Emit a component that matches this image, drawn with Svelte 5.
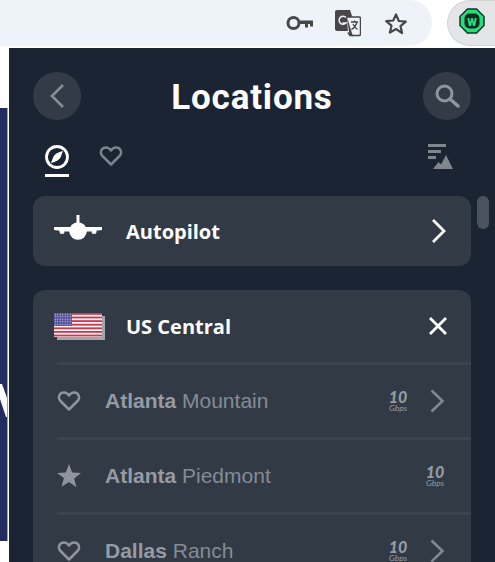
<script>
  const cities = [
    { name: 'Atlanta', area: 'Mountain', fav: false, arrow: true },
    { name: 'Atlanta', area: 'Piedmont', fav: true, arrow: false },
    { name: 'Dallas', area: 'Ranch', fav: false, arrow: true }
  ];

  const stripes = [0, 1, 2, 3, 4, 5, 6];
</script>

<div class="page">
  <header class="toolbar">
    <div class="omnibox">
      <svg class="key" width="28" height="16" viewBox="0 0 28 16">
        <circle cx="7.500" cy="8" r="5.500" fill="none" stroke="#474747" stroke-width="3" />
        <path d="M13 5.500h14v6h-3v-2.500h-2v3.500h-3v-3.500h-6z" fill="#474747" />
      </svg>
      <svg class="translate" width="26" height="27" viewBox="0 0 26 27">
        <path d="M2 0h13l7 21H2a2 2 0 0 1-2-2V2a2 2 0 0 1 2-2z" fill="#474747" />
        <path d="M12 7h12a1.500 1.500 0 0 1 1.500 1.500V24a1.500 1.500 0 0 1-1.500 1.500H15l-2-3" fill="#eef2f9" stroke="#474747" stroke-width="1.500" />
        <path d="M12 7l6 19.500-3.500-1z" fill="#474747" />
        <path d="M11 7.500A4 4 0 1 0 11 13H7.500" fill="none" stroke="#eef2f9" stroke-width="1.500" />
        <path d="M16 12h7M19.500 10.500v1.500M22 12c-1 4-3 6-5.500 7.500M18 14c1 2 2.500 4 4.500 5.500" fill="none" stroke="#474747" stroke-width="1.300" />
      </svg>
      <svg class="star" width="24" height="23" viewBox="0 0 24 23">
        <path d="M12 2.500l2.800 6.500 7 .6-5.300 4.600 1.600 6.900L12 17l-6.100 3.600 1.600-6.900L2.200 9.100l7-.6z" fill="none" stroke="#474747" stroke-width="2.200" stroke-linejoin="round" />
      </svg>
    </div>
    <div class="extension">
      <svg width="26" height="26" viewBox="0 0 26 26">
        <path d="M8.500 1h9L25 8.500v9L17.500 25h-9L1 17.500v-9z" fill="#25e07a" stroke="#12352a" stroke-width="1.500" />
        <rect x="5.500" y="5.500" width="15" height="15" rx="5" fill="#0f2a22" />
        <text x="13" y="17.500" text-anchor="middle" class="badge-letter">W</text>
      </svg>
    </div>
  </header>

  <div class="content">
    <div class="behind">
      <div class="behind-navy">
        <svg class="sliver" width="7" height="40" viewBox="0 0 7 40">
          <path d="M0 0h2l5 14v19h-1L0 15z" fill="#fff" />
        </svg>
      </div>
    </div>

    <main class="panel">
      <div class="top">
        <button class="round" aria-label="Back">
          <svg width="16" height="26" viewBox="0 0 16 26">
            <path d="M14 2L3 13l11 11" fill="none" stroke="#8a9098" stroke-width="2.500" />
          </svg>
        </button>
        <h1>Locations</h1>
        <button class="round" aria-label="Search">
          <svg width="26" height="26" viewBox="0 0 26 26">
            <circle cx="10.500" cy="10.500" r="7.500" fill="none" stroke="#8f959d" stroke-width="3" />
            <path d="M16 16l8 7" stroke="#8f959d" stroke-width="3.500" stroke-linecap="round" />
          </svg>
        </button>
      </div>

      <div class="tabs">
        <div class="tab active">
          <svg width="24" height="24" viewBox="0 0 24 24">
            <circle cx="12" cy="12" r="10.500" fill="none" stroke="#fff" stroke-width="2.800" />
            <path d="M18 6c-5 1-8 3-9.500 5.500L6 18c5-1 8-3 9.500-5.500z" fill="#fff" />
          </svg>
        </div>
        <div class="tab">
          <svg width="24" height="22" viewBox="0 0 24 22">
            <path d="M12 19.500L3.500 11C.5 8 2 2.500 7 2.500c2.500 0 4 1.500 5 3 1-1.500 2.500-3 5-3 5 0 6.500 5.500 3.500 8.500z" fill="none" stroke="#7b828b" stroke-width="2.500" stroke-linejoin="round" />
          </svg>
        </div>
        <svg class="sort" width="25" height="25" viewBox="0 0 25 25">
          <path d="M0 0h18v3H0zM0 6h13v3H0zM0 12h8v3H0z" fill="#7f868e" />
          <path d="M5 25l5.500-7 2.500 2.500L18 11l7 14z" fill="#7f868e" />
        </svg>
      </div>

      <section class="card autopilot">
        <svg class="plane" width="48" height="28" viewBox="0 0 48 28">
          <path d="M22.500 0h3v8h-3z" fill="#fff" />
          <circle cx="24" cy="16" r="8.800" fill="#fff" />
          <path d="M0 12h48v3l-12 1.500H12L0 15z" fill="#fff" />
          <circle cx="8" cy="16.500" r="2.500" fill="#fff" />
          <circle cx="40" cy="16.500" r="2.500" fill="#fff" />
        </svg>
        <span class="title">Autopilot</span>
        <svg class="chevron" width="16" height="26" viewBox="0 0 16 26">
          <path d="M2 2l11 11L2 24" fill="none" stroke="#fff" stroke-width="2.800" />
        </svg>
      </section>

      <section class="card region">
        <div class="region-head">
          <svg class="flag" width="51" height="27" viewBox="0 0 51 27">
            <defs>
              <pattern id="stars" width="2.500" height="2.500" patternUnits="userSpaceOnUse">
                <rect width="2.500" height="2.500" fill="#55529a" />
                <circle cx="1.200" cy="1.200" r=".6" fill="#d8d8ea" />
              </pattern>
            </defs>
            <rect x="3" y="3" width="48" height="24" fill="#a3a5ab" />
            <rect width="48" height="24" fill="#f7f2f3" />
            {#each stripes as s}
              <rect y={s * 3.6} width="48" height="1.800" fill="#c63a50" />
            {/each}
            <rect width="18" height="13" fill="url(#stars)" />
          </svg>
          <span class="title">US Central</span>
          <svg class="close" width="20" height="20" viewBox="0 0 20 20">
            <path d="M2 2l16 16M18 2L2 18" stroke="#fff" stroke-width="2.800" />
          </svg>
        </div>

        {#each cities as city}
          <div class="row">
            {#if city.fav}
              <svg class="fav" width="24" height="24" viewBox="0 0 24 24">
                <path d="M12 0l3.200 8.500 8.800.5-6.900 5.500 2.400 8.800L12 18l-7.500 4.800 2.400-8.800L0 9l8.800-.5z" fill="#8f959e" />
              </svg>
            {:else}
              <svg class="fav" width="24" height="22" viewBox="0 0 24 22">
                <path d="M12 19.500L3.500 11C.5 8 2 2.500 7 2.500c2.500 0 4 1.500 5 3 1-1.500 2.500-3 5-3 5 0 6.500 5.500 3.500 8.500z" fill="none" stroke="#8f959e" stroke-width="2.500" stroke-linejoin="round" />
              </svg>
            {/if}
            <span class="city"><b>{city.name}</b> {city.area}</span>
            <div class="speed">
              <strong>10</strong>
              <small>Gbps</small>
            </div>
            {#if city.arrow}
              <svg class="row-arrow" width="15" height="24" viewBox="0 0 15 24">
                <path d="M1.500 1.500L12.500 12 1.500 22.500" fill="none" stroke="#81878f" stroke-width="2.600" />
              </svg>
            {/if}
          </div>
        {/each}
      </section>

      <div class="scrollbar"></div>
    </main>
  </div>
</div>

<style>
  :global(body) {
    margin: 0;
    background: #fff;
    overflow: hidden;
  }

  .page {
    width: 495px;
    height: 562px;
    display: flex;
    flex-direction: column;
    overflow: hidden;
  }

  .toolbar {
    height: 48px;
    flex: none;
    display: flex;
    background: #fff;
    box-sizing: border-box;
  }

  .omnibox {
    width: 432px;
    height: 46px;
    background: #eef2f9;
    border-radius: 0 23px 23px 0;
    display: flex;
    align-items: center;
    box-sizing: border-box;
    padding-left: 286px;
  }

  .translate {
    margin-left: 21px;
  }

  .star {
    margin-left: 23px;
  }

  .extension {
    width: 48px;
    height: 46px;
    margin-left: 15px;
    border-radius: 24px 0 0 24px;
    background: #e4e5e6;
    border: 1px solid #d4d4d4;
    border-right: 0;
    box-sizing: border-box;
    display: flex;
    align-items: center;
    padding: 0 0 4px 11px;
  }

  .badge-letter {
    font: 900 11px 'Roboto', sans-serif;
    fill: #25e07a;
  }

  .content {
    flex: 1;
    display: flex;
    min-height: 0;
  }

  .behind {
    width: 9px;
    flex: none;
    padding-top: 60px;
    box-sizing: border-box;
  }

  .behind-navy {
    position: relative;
    width: 8px;
    height: 433px;
    background: #232c5c;
    border-right: 1px solid #9aa0b0;
    box-sizing: border-box;
  }

  .sliver {
    position: absolute;
    left: 0;
    top: 276px;
  }

  .panel {
    position: relative;
    flex: 1;
    background: #1b2433;
    padding: 24px 24px 0;
    overflow: hidden;
    font-family: 'Liberation Sans', Arial, sans-serif;
  }

  .top {
    display: flex;
    align-items: center;
    justify-content: space-between;
  }

  .round {
    width: 48px;
    height: 48px;
    border: 0;
    padding: 0;
    border-radius: 50%;
    background: #333b47;
    display: flex;
    align-items: center;
    justify-content: center;
  }

  h1 {
    margin: 3px 0 0;
    font: 700 35px 'Roboto', sans-serif;
    letter-spacing: 0.8px;
    color: #fff;
  }

  .tabs {
    display: flex;
    align-items: flex-start;
    margin-top: 24px;
    padding: 0 12px;
    height: 52px;
    box-sizing: border-box;
  }

  .tab {
    width: 24px;
    height: 33px;
    margin-right: 30px;
    padding-top: 1px;
    box-sizing: border-box;
  }

  .tab.active {
    border-bottom: 3px solid #fff;
  }

  .sort {
    margin-left: auto;
    margin-right: 6px;
  }

  .card {
    background: #323a46;
    border-radius: 12px;
  }

  .autopilot {
    height: 70px;
    display: flex;
    align-items: center;
    padding: 0 24px 0 21px;
    margin-bottom: 24px;
  }

  .title {
    font: 700 20px 'Open Sans', sans-serif;
    color: #fff;
    margin-left: 24px;
  }

  .plane {
    margin-top: -4px;
  }

  .chevron {
    margin-left: auto;
  }

  .region-head {
    height: 72px;
    display: flex;
    align-items: center;
    padding: 0 23px 0 21px;
  }

  .flag {
    margin: 1px -3px 0 0;
    flex: none;
  }

  .title + .close {
    margin-left: auto;
  }

  .row {
    height: 72px;
    margin-left: 24px;
    border-top: 3px solid #3b434f;
    display: flex;
    align-items: center;
    padding-right: 26px;
  }

  .fav {
    flex: none;
  }

  .city {
    margin-left: 24px;
    font-size: 21px;
    color: #858c96;
  }

  .city b {
    color: #959ba3;
  }

  .speed {
    margin-left: auto;
    width: 20px;
    display: flex;
    flex-direction: column;
    align-items: center;
    font-family: 'Lato', sans-serif;
    font-style: italic;
    color: #959ba3;
  }

  .speed strong {
    font-size: 16px;
    font-weight: 900;
    line-height: 14px;
  }

  .speed small {
    font-size: 8.500px;
    line-height: 9px;
  }

  .row-arrow {
    margin-left: 22px;
    flex: none;
  }

  .scrollbar {
    position: absolute;
    top: 148px;
    right: 6px;
    width: 12px;
    height: 33px;
    border-radius: 6px;
    background: #4a525d;
  }
</style>
